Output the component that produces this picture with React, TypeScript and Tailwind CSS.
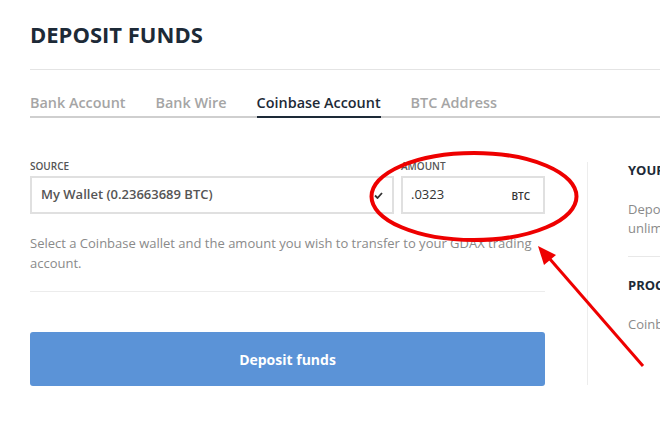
import { useState } from 'react';

const tabs = ['Bank Account', 'Bank Wire', 'Coinbase Account', 'BTC Address'];

export default function App() {
  const [active, setActive] = useState('Coinbase Account');

  return (
    <div className="relative w-[660px] h-[426px] overflow-hidden bg-white font-['Open_Sans',sans-serif]">
      <div className="pl-[30px]">
        <h1 className="h-[70px] w-[700px] border-b border-[#e4e4e4] pt-[20px] text-[22px] font-bold leading-[28px] text-[#1d2a37]">
          DEPOSIT FUNDS
        </h1>

        {/* Tabs */}
        <nav className="mt-[23px] flex w-[700px] gap-[30px] border-b-2 border-[#cfcfcf]">
          {tabs.map((t) => (
            <button
              key={t}
              onClick={() => setActive(t)}
              className={
                t === active
                  ? '-mb-[2px] border-b-2 border-[#1d2a37] pb-[3px] text-[14.4px] font-semibold leading-[20px] text-[#1d2a37]'
                  : 'pb-[3px] text-[14.4px] font-semibold leading-[20px] text-[#a5a5a5]'
              }
            >
              {t}
            </button>
          ))}
        </nav>

        <div className="mt-[42px] flex">
          {/* Form */}
          <div className="w-[515px]">
            <div className="flex gap-[7px]">
              <div className="w-[364px]">
                <label className="block text-[10px] font-semibold uppercase leading-[12px] text-[#555]">Source</label>
                <div className="mt-[4px] flex h-[38px] items-center justify-between border-2 border-[#e0e0e0] pl-[9px] pr-[9px]">
                  <span className="text-[13px] font-semibold text-[#555]">My Wallet (0.23663689 BTC)</span>
                  <svg width="9" height="7" viewBox="0 0 9 7" className="mt-[1px]">
                    <polyline points="1,3.5 3.5,6 8,1" fill="none" stroke="#333" strokeWidth="1.8" />
                  </svg>
                </div>
              </div>
              <div className="w-[144px]">
                <label className="block text-[10px] font-semibold uppercase leading-[12px] text-[#555]">Amount</label>
                <div className="mt-[4px] flex h-[38px] items-center justify-between border-2 border-[#e0e0e0] pl-[8px] pr-[13px]">
                  <span className="text-[13px] text-[#333]">.0323</span>
                  <span className="mt-[3px] text-[10px] font-semibold text-[#333]">BTC</span>
                </div>
              </div>
            </div>
            <p className="mt-[19px] border-b border-[#ececec] pb-[18px] text-[13px] leading-[20px] text-[#8a8a8a]">
              Select a Coinbase wallet and the amount you wish to transfer to your GDAX trading account.
            </p>
            <button className="mt-[40px] h-[54px] w-full rounded-[3px] bg-[#5b93d7] text-[14px] font-bold text-white">
              Deposit funds
            </button>
          </div>

          {/* Side info */}
          <div className="ml-[42px] mt-[2px] h-[223px] w-[300px] shrink-0 border-l border-[#ededed] pl-[40px]">
            <h3 className="text-[13px] font-bold leading-[16px] text-[#1d2a37]">YOUR LIMITS</h3>
            <p className="mt-[22px] w-[200px] border-b border-[#e8e8e8] pb-[18px] text-[13px] leading-[19px] text-[#8a8a8a]">
              Deposits from Coinbase unlimited.
            </p>
            <h3 className="mt-[20px] text-[13px] font-bold leading-[16px] text-[#1d2a37]">PROCESSING</h3>
            <p className="mt-[22px] text-[13px] leading-[19px] text-[#8a8a8a]">Coinbase transfers are instant.</p>
          </div>
        </div>
      </div>

      {/* red annotation */}
      <svg className="pointer-events-none absolute left-0 top-0" width="660" height="426" viewBox="0 0 660 426">
        <ellipse cx="474" cy="196.5" rx="102.5" ry="43.5" fill="none" stroke="#ee0000" strokeWidth="4" />
        <line x1="643" y1="366" x2="549" y2="258" stroke="#ee0000" strokeWidth="3" />
        <polygon points="538,246 556,255 544,265" fill="#ee0000" />
      </svg>
    </div>
  );
}
